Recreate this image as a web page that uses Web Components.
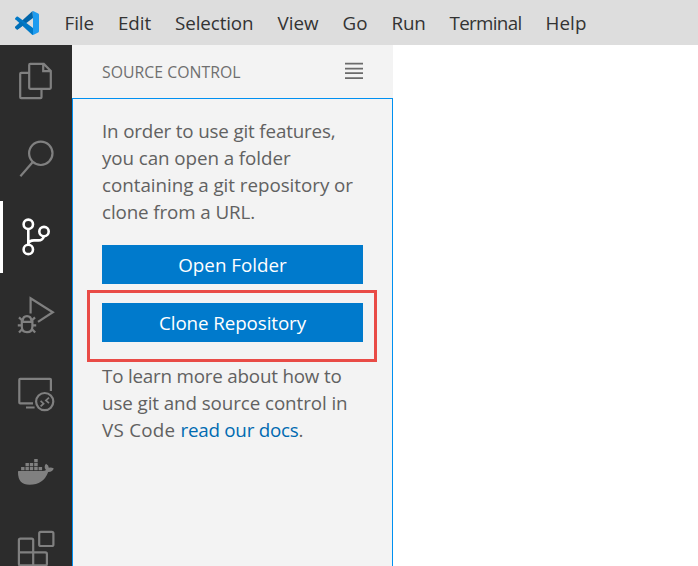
<!DOCTYPE html>
<html lang="en">
<head>
<meta charset="utf-8">
<title>Source Control</title>
<style>
html,body{margin:0;height:100%;overflow:hidden;background:#fff}
body{font-family:"Open Sans","Noto Sans",sans-serif;font-size:18.8px;color:#616161}
</style>
</head>
<body>
<code-window></code-window>
<script>
const define = (name, html, ready) => customElements.define(name, class extends HTMLElement {
  connectedCallback() {
    if (this.shadowRoot) return;
    const t = document.createElement('template');
    t.innerHTML = html;
    this.attachShadow({mode:'open'}).appendChild(t.content.cloneNode(true));
    if (ready) ready(this);
  }
});

// Line of text tracked so that its advance equals the "w" attribute.
define('text-run', `<style>:host{display:inline-block;white-space:pre;flex:none}</style><slot></slot>`, el => {
  const w = +el.getAttribute('w');
  const natural = el.getBoundingClientRect().width;
  el.style.letterSpacing = ((w - natural) / el.textContent.length).toFixed(3) + 'px';
});

const icons = {
  files: `<path d="M28.8 27.8H21.2Q20.2 27.8 20.2 28.8V52.2Q20.2 53.2 21.2 53.2H40.5Q41.5 53.2 41.5 52.2V44.5M30.2 18.9H43.8L50.8 25.9V42.8Q50.8 43.8 49.8 43.8H30.2Q29.2 43.8 29.2 42.8V19.9Q29.2 18.9 30.2 18.9ZM43.2 19V26.2H50.6"/>`,
  search: `<circle cx="40.8" cy="30.3" r="11.7"/><path d="M32.8 39L20.4 53.2"/>`,
  git: `<g stroke-width="2.6"><circle cx="28.3" cy="23.3" r="4.7"/><circle cx="28.3" cy="48.4" r="4.7"/><circle cx="44" cy="30.6" r="4.7"/><path d="M28.3 28.3V43.4M43.8 35.6Q42.5 39.4 38.5 39.4H34Q28.8 39.4 28.3 43.2"/></g>`,
  debug: `<path d="M30.6 34.6V19.2L52.8 33.2L38 42.8"/><path d="M21.8 42.8V47.6Q21.8 53.2 27 53.2T32.4 47.6V42.8ZM22.6 42.5Q22.8 37.2 27 37.2T31.5 42.5M22.5 41.8L19 38.4M31.6 41.8L35 38.4M21.8 46.4H17.8M32.4 46.4H36.2M22.4 50L19 53.6M31.8 50L35.2 53.6"/>`,
  remote: `<path d="M33 46.4H20.2Q19.3 46.4 19.3 45.5V22.7Q19.3 21.8 20.2 21.8H50Q50.9 21.8 50.9 22.7V34M26 50.5H34.6"/><circle cx="44.7" cy="44.6" r="8.6"/><path stroke-width="1.7" d="M40.6 43.8L43.6 46.7L40.6 49.4M49 40.6L45.9 43.4L49 46.2"/>`,
  docker: `<g fill="currentColor" stroke="none"><path d="M34.2 24h3.5v3.2h-3.5zM25.5 28h3.4v3.2h-3.4zM29.8 28h3.4v3.2h-3.4zM34.2 28h3.5v3.2h-3.5zM21.1 32h3.4v3.2h-3.4zM25.5 32h3.4v3.2h-3.4zM29.8 32h3.4v3.2h-3.4zM34.2 32h3.5v3.2h-3.5zM38.6 32h3.5v3.2h-3.5z"/><path d="M18.2 36H42.5Q45 36 46 35Q43.3 32 46 28.8Q48.8 30.2 48.8 32.8Q51.5 32.2 53.8 33.6Q52.4 37.2 48.2 37Q43.5 49.8 29.5 49.8Q18 49.8 18 37.6Z"/></g>`,
  extensions: `<rect x="39.2" y="18.8" width="14.2" height="14.2" rx="1.6"/><path d="M20.4 25.7H31.7Q33.2 25.7 33.2 27.2V39.4H45.4Q46.9 39.4 46.9 40.9V50.9Q46.9 52.4 45.4 52.4H20.4Q18.9 52.4 18.9 50.9V27.2Q18.9 25.7 20.4 25.7ZM18.9 39.4H33.2V52.4"/>`
};

define('vs-logo', `<style>:host{display:block;width:24px;height:24px}svg{display:block}</style>
<svg width="24" height="24" viewBox="0 0 24 24"><path fill="#0065a9" d="M17.6 0L.3 15.8Q-.2 16.5.3 17.1L1.9 18.4Q2.4 18.7 3 18.3L18 7Z"/><path fill="#0079c7" d="M1.9 5.6Q2.4 5.3 3 5.7L18 17V24H17.4L.3 8.2Q-.2 7.5.3 6.9Z"/><path fill="#0070b8" d="M.3 15.8L6 10.6 9.2 13.6 3 18.3Q2.4 18.7 1.9 18.4L.3 17.1Q-.2 16.5.3 15.8Z"/><path fill="#1f9cf0" d="M17.2.2Q17.8-.1 18.6.2L23.2 2.5Q24 2.9 24 3.8V20.2Q24 21.1 23.2 21.5L18.6 23.8Q17.8 24.1 17.2 23.8Q18 23.6 18 22.8V1.2Q18 .4 17.2.2Z"/></svg>`);

define('menu-bar', `<style>
:host{display:flex;align-items:center;height:45px;box-sizing:border-box;background:#ddd;color:#333;padding-left:15px;padding-top:1px}
nav{display:flex;gap:24px;padding-left:25.5px;line-height:27px}
</style><vs-logo></vs-logo><nav><text-run w="29.5">File</text-run><text-run w="33">Edit</text-run><text-run w="78.5">Selection</text-run><text-run w="41">View</text-run><text-run w="25">Go</text-run><text-run w="34">Run</text-run><text-run w="72">Terminal</text-run><text-run w="41">Help</text-run></nav>`);

define('activity-item', `<style>
:host{display:block;flex:none;width:72px;height:72px;box-sizing:border-box;color:#808080}
:host([active]){color:#fff;box-shadow:inset 3px 0 #fff}
svg{display:block;fill:none;stroke:currentColor;stroke-width:2.2}
</style><svg width="72" height="72" viewBox="0 0 72 72"></svg>`, el => {
  el.shadowRoot.querySelector('svg').innerHTML = icons[el.getAttribute('icon')];
});

define('activity-bar', `<style>
:host{display:flex;flex-direction:column;gap:6px;background:#2c2c2c;overflow:hidden;min-height:0}
</style>${Object.keys(icons).map(k => `<activity-item icon="${k}"${k === 'git' ? ' active' : ''}></activity-item>`).join('')}`);

define('action-button', `<style>
:host{display:flex;height:39px;box-sizing:border-box;padding-top:2px;align-items:center;justify-content:center;background:#007acc;color:#fff;line-height:27px}
:host([highlight]){position:relative}
:host([highlight])::after{content:"";position:absolute;left:-15px;top:-13px;width:284px;height:66px;border:3px solid #e94b46}
</style><slot></slot>`);

define('side-panel', `<style>
:host{display:flex;flex-direction:column;background:#f3f3f3;min-height:0}
header{height:53px;flex:none;display:flex;align-items:center;justify-content:space-between;padding:0 30px;font-size:15.8px;color:#6f6f6f;box-sizing:border-box}
header svg{display:block;margin-right:-1px;margin-bottom:1px}
section{flex:1;border:1px solid #0090f1;border-bottom:0;padding:19px 29px 0;line-height:27px;display:flex;flex-direction:column}
p{margin:0;display:flex;flex-direction:column;align-items:flex-start}
p text-run{height:27px}
.first{margin-bottom:19px}
action-button{margin-bottom:19px}
.last{margin-top:2px}
.row{display:flex}
a{color:#006ab1;text-decoration:none}
</style>
<header><text-run w="138.5">SOURCE CONTROL</text-run><svg width="20" height="18" viewBox="0 0 20 18" stroke="#6b6b6b" stroke-width="1.7"><path d="M1 1.7H19M1 6.7H19M1 11.2H19M1 16.2H19"/></svg></header>
<section>
<p class="first"><text-run w="233.5">In order to use git features,</text-run><text-run w="188.5">you can open a folder</text-run><text-run w="251">containing a git repository or</text-run><text-run w="153">clone from a URL.</text-run></p>
<action-button><text-run w="108.5">Open Folder</text-run></action-button>
<action-button highlight><text-run w="147">Clone Repository</text-run></action-button>
<p class="last"><text-run w="239.5">To learn more about how to</text-run><text-run w="245.5">use git and source control in</text-run><span class="row"><text-run w="78.5">VS Code </text-run><a><text-run w="118">read our docs</text-run></a><text-run w="5">.</text-run></span></p>
</section>`);

define('code-window', `<style>
:host{display:grid;height:100vh;grid-template:45px minmax(0,1fr) / 72px 321px 1fr}
menu-bar{grid-column:1/-1}
main{background:#fff}
</style><menu-bar></menu-bar><activity-bar></activity-bar><side-panel></side-panel><main></main>`);
</script>
</body>
</html>
